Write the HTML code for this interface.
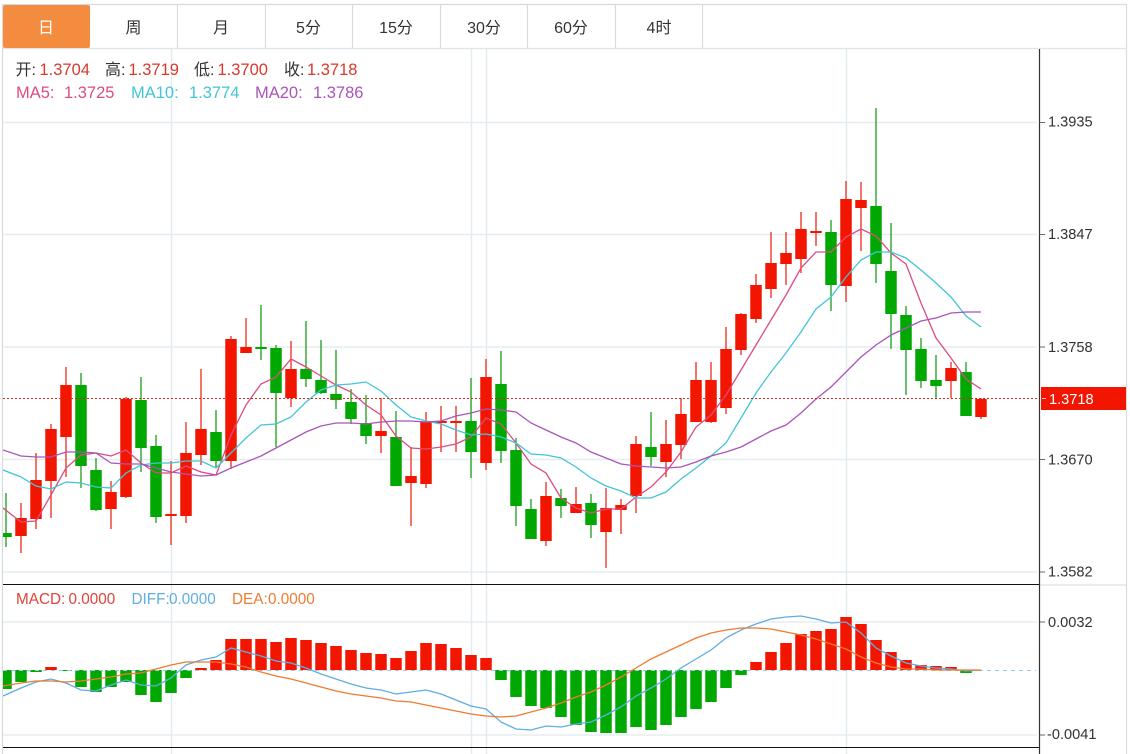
<!DOCTYPE html>
<html lang="zh"><head><meta charset="utf-8"><title>K线图</title>
<style>
html,body{margin:0;padding:0;background:#fff;width:1130px;height:754px;overflow:hidden}
svg{display:block}
text{font-family:"Liberation Sans","Noto Sans CJK SC",sans-serif}
</style></head><body>
<svg width="1130" height="754" viewBox="0 0 1130 754" xmlns="http://www.w3.org/2000/svg">
<defs><clipPath id="c"><rect x="3" y="49" width="1036" height="705"/></clipPath></defs>
<rect width="1130" height="754" fill="#fff"/>
<!-- frame -->
<path d="M2.5 4.5H1126.5V754M2.5 4.5V754" fill="none" stroke="#d8dbde" stroke-width="1.200"/>
<path d="M3 48.5H1127" stroke="#e0e4e7" stroke-width="1.200"/>
<path d="M177.5 5V48M265.5 5V48M352.5 5V48M440.5 5V48M527.5 5V48M615.5 5V48M702.5 5V48" stroke="#d8dbde" stroke-width="1.200"/>
<rect x="3" y="5" width="87" height="43" rx="2" fill="#f48c40"/>
<g font-size="16" text-anchor="middle" fill="#333">
<text x="46" y="33" fill="#fff">日</text><text x="133.500" y="33">周</text><text x="221" y="33">月</text><text x="308.500" y="33">5分</text><text x="396" y="33">15分</text><text x="484" y="33">30分</text><text x="571" y="33">60分</text><text x="659" y="33">4时</text>
</g>
<!-- grid -->
<path d="M3 122.500H1037M3 234.500H1037M3 347H1037M3 459.500H1037M3 572H1037M3 622H1037M3 735H1037" stroke="#e6edf1" stroke-width="1.500"/>
<path d="M171.500 49V754M471.500 49V754M486.500 49V754M846.500 49V754" stroke="#e3ebf2" stroke-width="1.500"/>
<g clip-path="url(#c)" fill="none">
<!-- wicks -->
<path stroke="#ee3a2a" stroke-width="1.400" d="M21 503V553M36 453V529M51 424V518M66 367V477M111 481V529M126 397V498M171 461V545M186 422V523M201 369V465M231 336V469M246 318V353M291 341V407M381 398V453M411 447V526M426 412V488M441 406V452M456 406V452M486 359V470M546 482V546M576 487V513M606 488V568M621 499V534M636 436V513M666 420V477M681 398V459M696 362V422M711 362V423M726 327V414M741 313V355M756 274V323M771 232V298M786 232V285M801 212V273M816 212V246M846 181V302M861 182V251M951 362V398M981 398V419"/>
<path stroke="#2ca52c" stroke-width="1.400" d="M6 493V547M81 373V488M96 458V511M141 377V472M156 435V523M216 410V467M261 305V360M276 345V447M306 321V387M321 340V394M336 350V409M351 389V424M366 395V444M396 411V486M471 378V478M501 351V463M516 438V526M531 499V539M561 489V518M591 494V538M651 412V466M831 220V311M876 108V283M891 223V349M906 306V395M921 338V388M936 355V398M966 362V416"/>
<!-- bodies -->
<path stroke="#f21600" stroke-width="11.500" d="M21 518V536M36 480V519M51 429V481M66 385V437M111 492V509M126 399V497M171 514V516M186 453V516M201 429V455M231 339V461M246 347V353M291 369V398M381 431V436M411 476V483M426 422V484M441 421V423M456 421V423M486 377V463M546 496V541M576 504V513M606 508V532M621 505V510M636 444V496M666 444V462M681 414V445M696 380V422M711 380V422M726 349V408M741 314V350M756 285V319M771 263V289M786 253V264M801 229V259M816 231V233M846 199V286M861 200V208M951 368V381M981 399V417"/>
<path stroke="#02a802" stroke-width="11.500" d="M6 533V537M81 385V466M96 470V510M141 400V448M156 446V517M216 432V461M261 347V349M276 348V393M306 369V379M321 380V393M336 394V400M351 402V419M366 423V436M396 437V486M471 421V452M501 384V451M516 450V506M531 509V539M561 498V506M591 503V525M651 447V457M831 232V285M876 206V264M891 271V314M906 315V350M921 349V381M936 380V386M966 372V416"/>
<!-- MACD bars -->
<path stroke="#f21600" stroke-width="11.500" d="M51 670V667M201 670V668M216 670V660M231 670V639M246 670V639M261 670V639M276 670V642M291 670V638M306 670V640M321 670V643M336 670V646M351 670V650M366 670V653M381 670V654M396 670V658M411 670V651M426 670V643M441 670V644M456 670V648M471 670V655M486 670V658M756 670V662M771 670V652M786 670V643M801 670V634M816 670V631M831 670V629M846 670V617M861 670V624M876 670V640M891 670V652M906 670V660M921 670V665M936 670V666M951 670V667"/>
<path stroke="#02a802" stroke-width="11.500" d="M6 670V689M21 670V682M36 670V672M66 670V671M81 670V687M96 670V692M111 670V687M126 670V682M141 670V695M156 670V702M171 670V693M186 670V678M501 670V680M516 670V697M531 670V706M546 670V708M561 670V717M576 670V725M591 670V732M606 670V733M621 670V733M636 670V727M651 670V730M666 670V725M681 670V717M696 670V709M711 670V702M726 670V688M741 670V675M966 670V673"/>
<path stroke="#9cc9e6" stroke-width="1" stroke-dasharray="4 4" d="M3 670.500H1036"/>
<!-- MA lines -->
<path stroke="#dc4c82" stroke-width="1.300" d="M3 508L21 522L36 521L51 495L66 468L81 455L96 453L111 456L126 450L141 463L156 473L171 473L186 466L201 472L216 475L231 435L246 405L261 384L276 377L291 359L306 367L321 376L336 385L351 392L366 405L381 415L396 436L411 448L426 449L441 447L456 444L471 437L486 418L501 424L516 443L531 464L546 473L561 498L576 508L591 513L606 509L621 509L636 497L651 487L666 472L681 452L696 427L711 415L726 395L741 370L756 345L771 320L786 295L801 268L816 252L831 252L846 237L861 229L876 236L891 253L906 264L921 303L936 338L951 358L966 379L981 389"/>
<path stroke="#42c5d6" stroke-width="1.300" d="M3 470L21 477L36 486L51 489L66 482L81 483L96 487L111 488L126 473L141 465L156 463L171 463L186 461L201 461L216 468L231 453L246 438L261 425L276 424L291 417L306 402L321 390L336 385L351 384L366 382L381 391L396 405L411 417L426 421L441 424L456 430L471 435L486 434L501 437L516 443L531 454L546 455L561 458L576 467L591 478L606 486L621 491L636 498L651 498L666 492L681 479L696 468L711 456L726 443L741 418L756 393L771 372L786 353L801 332L816 309L831 297L846 277L861 260L876 252L891 252L906 258L921 270L936 283L951 297L966 316L981 327"/>
<path stroke="#a955ba" stroke-width="1.300" d="M3 450L21 456L36 457L51 457L66 452L81 452L96 453L111 463L126 464L141 464L156 468L171 472L186 474L201 476L216 475L231 468L246 462L261 456L276 448L291 440L306 432L321 426L336 423L351 423L366 424L381 422L396 421L411 421L426 422L441 421L456 416L471 413L486 409L501 410L516 412L531 423L546 430L561 437L576 443L591 452L606 458L621 464L636 466L651 467L666 468L681 467L696 462L711 456L726 452L741 447L756 439L771 431L786 425L801 413L816 399L831 387L846 372L861 357L876 345L891 335L906 328L921 321L936 318L951 313L966 312L981 312"/>
<!-- DIFF/DEA -->
<path stroke="#5fade2" stroke-width="1.300" d="M3 696L21 688L36 682L51 679L66 683L81 690L96 691L111 685L126 680L141 685L156 686L171 678L186 665L201 660L216 657L231 648L246 652L261 656L276 661L291 663L306 668L321 674L336 679L351 684L366 688L381 690L396 694L411 692L426 690L441 694L456 700L471 706L486 709L501 722L516 729L531 730L546 726L561 727L576 724L591 722L606 715L621 707L636 696L651 688L666 679L681 668L696 659L711 650L726 638L741 630L756 624L771 619L786 617L801 616L816 619L831 623L846 622L861 633L876 648L891 656L906 663L921 666L936 668L951 669L966 671L981 670"/>
<path stroke="#ee7b30" stroke-width="1.300" d="M3 686L21 683L36 681L51 681L66 682L81 681L96 679L111 677L126 674L141 673L156 669L171 665L186 662L201 662L216 662L231 664L246 667L261 672L276 676L291 679L306 683L321 687L336 691L351 694L366 696L381 698L396 701L411 702L426 705L441 708L456 711L471 714L486 716L501 717L516 716L531 712L546 708L561 703L576 697L591 692L606 685L621 677L636 668L651 659L666 652L681 645L696 638L711 633L726 630L741 628L756 628L771 629L786 632L801 635L816 639L831 644L846 649L861 657L876 663L891 667L906 669L921 669L936 670L951 670L966 670L981 670"/>
<!-- last price line -->
<path stroke="#d9251c" stroke-width="1" stroke-dasharray="2 2" d="M3 398.500H1037"/>
</g>
<!-- panel lines and axis -->
<path d="M3 584.500H1039M3 747.500H1039" stroke="#111" stroke-width="1"/>
<path d="M1039 585H1127" stroke="#d8d8d8" stroke-width="1"/>
<path d="M1039.500 49V754" stroke="#333" stroke-width="1.200"/>
<path d="M1040 122.500H1045M1040 234.500H1045M1040 347H1045M1040 459.500H1045M1040 572H1045M1040 622H1045M1040 735H1045" stroke="#666" stroke-width="1"/>
<rect x="1041" y="387" width="85" height="23" fill="#f21600"/>
<path d="M1042 398.500H1046" stroke="#fbb" stroke-width="1"/>
<g font-size="14.600" fill="#333">
<text x="1048" y="126.500">1.3935</text><text x="1048" y="239">1.3847</text><text x="1048" y="352">1.3758</text><text x="1048" y="464.500">1.3670</text><text x="1048" y="576.500">1.3582</text><text x="1049" y="404" fill="#fff">1.3718</text><text x="1048" y="627">0.0032</text><text x="1047" y="739">-0.0041</text>
</g>
<!-- legends -->
<g font-size="16" fill="#333"><text x="15.500" y="75">开:</text><text x="105" y="75">高:</text><text x="194" y="75">低:</text><text x="284" y="75">收:</text></g>
<g font-size="16.500" fill="#d9382c"><text x="39.500" y="75">1.3704</text><text x="128.500" y="75">1.3719</text><text x="217.500" y="75">1.3700</text><text x="307" y="75">1.3718</text></g>
<g font-size="16.500"><text x="16" y="98" fill="#dc4c82">MA5:</text><text x="64" y="98" fill="#dc4c82">1.3725</text><text x="131" y="98" fill="#42c5d6">MA10:</text><text x="189" y="98" fill="#42c5d6">1.3774</text><text x="255" y="98" fill="#a955ba">MA20:</text><text x="313" y="98" fill="#a955ba">1.3786</text></g>
<g font-size="15.300"><text x="16" y="604" fill="#e0423a">MACD:</text><text x="68.500" y="604" fill="#e0423a">0.0000</text><text x="131.500" y="604" fill="#5fade2">DIFF:</text><text x="169" y="604" fill="#5fade2">0.0000</text><text x="232" y="604" fill="#ee7b30">DEA:</text><text x="268" y="604" fill="#ee7b30">0.0000</text></g>
</svg>
</body></html>
